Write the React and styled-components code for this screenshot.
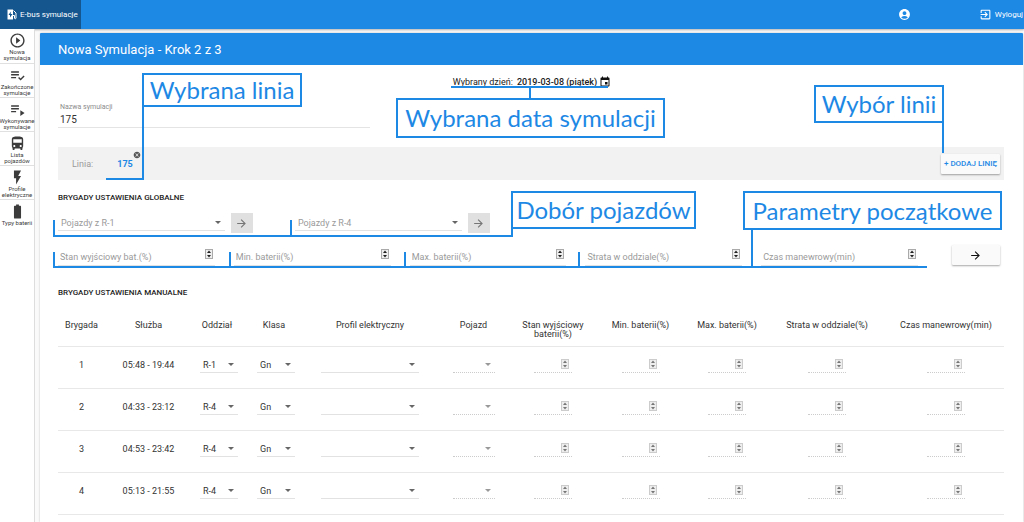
import React from "react";
import styled, { createGlobalStyle } from "styled-components";
import {
  MdPlayCircleOutline,
  MdPlaylistAddCheck,
  MdPlaylistPlay,
  MdDirectionsBus,
  MdFlashOn,
  MdBatteryFull,
  MdAccountCircle,
  MdExitToApp,
  MdEvent,
  MdCancel,
  MdArrowForward,
} from "react-icons/md";

const blue = "#1e88e5";

const Global = createGlobalStyle`
  * { box-sizing: border-box; }
  body { margin: 0; background: #fafafa; color: #333; font-family: Roboto, "Noto Sans", sans-serif; font-size: 9px; }
  button, input, select { font-family: inherit; color: inherit; margin: 0; padding: 0; border: 0; background: none; outline: 0; }
  #root { min-height: 100vh; }
`;

const Page = styled.div`
  position: relative;
  display: flex;
  flex-direction: column;
  height: 100vh;
  overflow: hidden;
`;

const TopBar = styled.header`
  display: flex;
  align-items: center;
  flex: none;
  height: 29px;
  background: ${blue};
  color: #fff;
  box-shadow: 0 1px 2px rgba(0, 0, 0, 0.3);
`;

const Brand = styled.a`
  display: flex;
  align-items: center;
  gap: 3px;
  height: 29px;
  padding: 0 3px 0 7px;
  background: #15568f;
  color: #fff;
  font-size: 8px;
  text-decoration: none;
  white-space: nowrap;
`;

const Account = styled.button`
  display: flex;
  margin-left: auto;
  margin-right: 68px;
  color: #fff;
`;

const Logout = styled.button`
  display: flex;
  align-items: center;
  gap: 3px;
  padding-right: 1px;
  color: #fff;
  font-size: 8px;
`;

const Columns = styled.div`
  display: flex;
  flex: 1;
`;

const Sidebar = styled.nav`
  display: flex;
  flex-direction: column;
  flex: none;
  width: 35px;
  background: #fff;
  border-right: 1px solid #ddd;
`;

const SideLink = styled.a`
  display: flex;
  flex-direction: column;
  align-items: center;
  height: ${(p) => (p.$first ? 35 : 34)}px;
  padding-top: 3px;
  border-bottom: ${(p) => (p.$last ? 0 : 1)}px solid #e0e0e0;
  color: #3c3c3c;
  font-size: 6px;
  line-height: 6px;
  text-align: center;
  text-decoration: none;
  span { white-space: pre; }
`;

const Card = styled.main`
  flex: 1;
  min-width: 0;
  margin: 4px 1px 0 5px;
  background: #fff;
  border-radius: 2px 2px 0 0;
  box-shadow: 0 0 2px rgba(0, 0, 0, 0.25);
`;

const Title = styled.h1`
  display: flex;
  align-items: center;
  height: 32px;
  margin: 0;
  padding: 0 18px;
  background: ${blue};
  border-radius: 1px 1px 0 0;
  color: #fff;
  font-size: 13px;
  font-weight: 400;
`;

const Body = styled.div`
  padding: 9px 19px 0 18px;
`;

const DateRow = styled.div`
  display: flex;
  justify-content: center;
  align-items: center;
  gap: 4px;
  height: 15px;
  color: #222;
  strong { font-weight: 500; }
`;

const DateButton = styled.button`
  display: flex;
  color: #111;
  margin: 0 -2px;
`;

const NameField = styled.label`
  display: flex;
  flex-direction: column;
  width: 33%;
  height: 39px;
  padding: 14px 2px 0;
  border-bottom: 1px solid #e4e4e4;
  color: #8c8c8c;
  font-size: 7px;
  line-height: 9px;
  input { height: 14px; width: 100%; font-size: 10px; color: #333; }
`;

const LineBar = styled.section`
  display: flex;
  align-items: center;
  height: 33px;
  margin-top: 19px;
  padding: 0 4px 0 14px;
  background: #f2f2f2;
  color: #9a9a9a;
`;

const LineTag = styled.div`
  display: flex;
  margin-left: 24px;
  color: ${blue};
  font-size: 9px;
  font-weight: 700;
  line-height: 14px;
`;

const RemoveLine = styled.button`
  display: flex;
  align-self: flex-start;
  margin-top: -6px;
  color: #555;
`;

const RaisedButton = styled.button`
  display: flex;
  align-items: center;
  justify-content: center;
  width: ${(p) => p.$width}px;
  height: 20px;
  margin-left: auto;
  background: #fafafa;
  border-radius: 1px;
  box-shadow: 0 1px 2px rgba(0, 0, 0, 0.35);
  color: ${(p) => p.$color};
  font-size: 8px;
  font-weight: 500;
  white-space: nowrap;
`;

const Heading = styled.h2`
  margin: ${(p) => p.$top}px 0 0;
  color: #222;
  font-size: 8px;
  line-height: 12px;
  font-weight: 500;
`;

const VehicleRow = styled.div`
  display: flex;
  gap: 42px;
  padding-top: 9px;
`;

const VehiclePick = styled.div`
  display: flex;
  align-items: center;
  gap: 6px;
  width: 20.6%;
`;

const SquareButton = styled.button`
  display: flex;
  align-items: center;
  justify-content: center;
  flex: none;
  width: 22px;
  height: 20px;
  background: #e0e0e0;
  color: #757575;
`;

const ParamRow = styled.div`
  display: grid;
  grid-template-columns: repeat(5, minmax(0, 157fr)) minmax(0, 67fr);
  column-gap: 19px;
  align-items: end;
  height: 33px;
  > button { margin: 0 4px 1px auto; }
`;

const Shell = styled.span`
  position: relative;
  display: flex;
  align-items: center;
  width: ${(p) => (p.$width ? p.$width + "px" : "100%")};
  height: ${(p) => p.$height || 16}px;
  margin: 0 auto;
  border-bottom: 1px ${(p) => (p.$dotted ? "dotted #ccc" : "solid #e2e2e2")};
`;

const SelectBox = styled.select`
  width: 100%;
  height: 14px;
  padding-left: 3px;
  appearance: none;
  color: ${(p) => (p.$muted ? "#9a9a9a" : "#333")};
  font-size: 9px;
  opacity: 1;
`;

const Caret = styled.i`
  position: absolute;
  right: 4px;
  top: 6px;
  border: 3px solid transparent;
  border-top-color: ${(p) => (p.$muted ? "#999" : "#666")};
  border-bottom: 0;
  pointer-events: none;
`;

const NumberBox = styled.input`
  flex: 1;
  min-width: 0;
  height: 12px;
  padding-left: 2px;
  font-size: 9px;
  appearance: textfield;
  &::placeholder { color: #9a9a9a; opacity: 1; }
  &::-webkit-inner-spin-button { appearance: none; margin: 0; }
`;

const SpinIcon = styled.svg`
  flex: none;
  width: 8px;
  height: 10px;
  margin: 0 ${(p) => (p.$muted ? 3 : 2)}px ${(p) => (p.$muted ? 2 : 6)}px 0;
`;

const Table = styled.table`
  width: 100%;
  margin-top: 5px;
  border-collapse: collapse;
  table-layout: fixed;
  text-align: center;
  font-size: 9px;
  th, td { padding: 0; border-bottom: 1px solid #e8e8e8; }
  th { height: 42px; padding-top: 17px; vertical-align: top; font-weight: 400; line-height: 9px; white-space: pre; }
  td { height: 42px; padding-bottom: 4px; }
`;

const SelectCell = styled.td`
  && { padding-left: ${(p) => p.$shift || 0}px; }
`;

const Marker = styled.div`
  position: absolute;
  left: ${(p) => p.$x}px;
  top: ${(p) => p.$y}px;
  width: ${(p) => p.$w || 2}px;
  height: ${(p) => p.$h || 2}px;
  background: ${blue};
  pointer-events: none;
`;

const Callout = styled.div`
  position: absolute;
  left: ${(p) => p.$x}px;
  top: ${(p) => p.$y}px;
  display: flex;
  align-items: center;
  justify-content: center;
  width: ${(p) => p.$w}px;
  height: ${(p) => p.$h}px;
  border: 2px solid ${blue};
  background: #fff;
  color: ${blue};
  font-family: Lato, "Open Sans", sans-serif;
  font-size: 24px;
  line-height: 28px;
  white-space: nowrap;
`;

function Spinner({ muted }) {
  return (
    <SpinIcon $muted={muted} viewBox="0 0 8 10" aria-hidden="true">
      <rect x="0.5" y="0.5" width="7" height="9" fill="#eee" stroke={muted ? "#ccc" : "#aaa"} />
      <path d="M2 4 4 1.5 6 4ZM2 6 4 8.5 6 6Z" fill={muted ? "#777" : "#222"} />
    </SpinIcon>
  );
}

function NumberField({ label, table }) {
  return (
    <Shell $width={table ? 38 : 0} $dotted={table} $height={table ? 16 : 17}>
      <NumberBox type="number" aria-label={label} placeholder={table ? "" : label} disabled={table} />
      <Spinner muted={table} />
    </Shell>
  );
}

function SelectField({ label, value, width, muted, dotted }) {
  return (
    <Shell $width={width} $dotted={dotted}>
      <SelectBox aria-label={label} $muted={muted} disabled={dotted}>
        <option>{value}</option>
      </SelectBox>
      <Caret $muted={dotted} />
    </Shell>
  );
}

const links = [
  ["Nowa\nsymulacja", MdPlayCircleOutline],
  ["Zakończone\nsymulacje", MdPlaylistAddCheck],
  ["Wykonywane\nsymulacje", MdPlaylistPlay],
  ["Lista\npojazdów", MdDirectionsBus],
  ["Profile\nelektryczne", MdFlashOn],
  ["Typy baterii", MdBatteryFull],
];

const params = ["Stan wyjściowy bat.(%)", "Min. baterii(%)", "Max. baterii(%)", "Strata w oddziale(%)", "Czas manewrowy(min)"];

const columns = [
  ["Brygada", 47],
  ["Służba", 87],
  ["Oddział", 50],
  ["Klasa", 64],
  ["Profil elektryczny", 128],
  ["Pojazd", 79],
  ["Stan wyjściowy\nbaterii(%)", 80],
  ["Min. baterii(%)", 95],
  ["Max. baterii(%)", 78],
  ["Strata w oddziale(%)", 122],
  ["Czas manewrowy(min)", 116],
];

const rows = [
  ["1", "05:48 - 19:44", "R-1"],
  ["2", "04:33 - 23:12", "R-4"],
  ["3", "04:53 - 23:42", "R-4"],
  ["4", "05:13 - 21:55", "R-4"],
];

const callouts = [
  ["Wybrana linia", 142, 73, 160, 34],
  ["Wybrana data symulacji", 396, 98, 269, 40],
  ["Wybór linii", 814, 85, 130, 38],
  ["Dobór pojazdów", 511, 191, 185, 38],
  ["Parametry początkowe", 743, 191, 259, 39],
];

/* Lines that tie a callout to its part of the form: x, y, width, height. */
const markers = [
  [142, 106, 2, 74],
  [106, 178, 38, 2],
  [451, 86, 157, 2],
  [529, 86, 2, 12],
  [942, 122, 2, 31],
  [511, 228, 2, 9],
  [53, 235, 460, 2],
  [53, 220, 2, 17],
  [290, 220, 2, 17],
  [53, 266, 874, 2],
  [53, 252, 2, 15],
  [229, 252, 2, 15],
  [404, 252, 2, 15],
  [578, 252, 2, 15],
  [751, 230, 2, 37],
];

export default function App() {
  return (
    <Page>
      <Global />
      <TopBar>
        <Brand href="#home">
          <svg width="10" height="11" viewBox="0 0 20 22" aria-hidden="true">
            <path d="M1 1h11v20H1z" fill="#fff" />
            <path d="M7.500 5 3 12h3v5l5-7H7.500z" fill="#15568f" />
            <path d="M13 3l5 5v10c0 2-3 2-3 0v-5h-3" fill="none" stroke="#fff" strokeWidth="2" />
          </svg>
          E-bus symulacje
        </Brand>
        <Account aria-label="Konto"><MdAccountCircle size={13} /></Account>
        <Logout><MdExitToApp size={13} />Wyloguj</Logout>
      </TopBar>
      <Columns>
        <Sidebar>
          {links.map(([label, Icon], i) => (
            <SideLink href="#menu" key={label} $first={i === 0} $last={i === links.length - 1}>
              <Icon size={17} />
              <span>{label}</span>
            </SideLink>
          ))}
        </Sidebar>
        <Card>
          <Title>Nowa Symulacja - Krok 2 z 3</Title>
          <Body>
            <DateRow>
              <span>Wybrany dzień:</span>
              <strong>2019-03-08 (piątek)</strong>
              <DateButton aria-label="Zmień datę"><MdEvent size={12} /></DateButton>
            </DateRow>
            <NameField>
              Nazwa symulacji
              <input type="text" defaultValue="175" />
            </NameField>
            <LineBar>
              <span>Linia:</span>
              <LineTag>
                175
                <RemoveLine aria-label="Usuń linię 175"><MdCancel size={8} /></RemoveLine>
              </LineTag>
              <RaisedButton $width={59} $color={blue}>+ DODAJ LINIĘ</RaisedButton>
            </LineBar>
            <Heading $top={12}>BRYGADY USTAWIENIA GLOBALNE</Heading>
            <VehicleRow>
              {["Pojazdy z R-1", "Pojazdy z R-4"].map((name) => (
                <VehiclePick key={name}>
                  <SelectField label={name} value={name} muted />
                  <SquareButton aria-label={"Zastosuj " + name}><MdArrowForward size={13} /></SquareButton>
                </VehiclePick>
              ))}
            </VehicleRow>
            <ParamRow>
              {params.map((name) => <NumberField key={name} label={name} />)}
              <RaisedButton $width={48} $color="#111" aria-label="Zastosuj parametry"><MdArrowForward size={13} /></RaisedButton>
            </ParamRow>
            <Heading $top={21}>BRYGADY USTAWIENIA MANUALNE</Heading>
            <Table>
              <colgroup>{columns.map(([name, w]) => <col key={name} width={w} />)}</colgroup>
              <thead>
                <tr>{columns.map(([name]) => <th key={name} scope="col">{name}</th>)}</tr>
              </thead>
              <tbody>
                {rows.map(([id, time, dept]) => (
                  <tr key={id}>
                    <td>{id}</td>
                    <td>{time}</td>
                    <SelectCell $shift={4}><SelectField label="Oddział" value={dept} width={38} /></SelectCell>
                    <SelectCell $shift={4}><SelectField label="Klasa" value="Gn" width={38} /></SelectCell>
                    <SelectCell><SelectField label="Profil elektryczny" value="" width={98} /></SelectCell>
                    <SelectCell><SelectField label="Pojazd" value="" width={42} dotted /></SelectCell>
                    {columns.slice(6).map(([name]) => (
                      <td key={name}><NumberField label={name} table /></td>
                    ))}
                  </tr>
                ))}
              </tbody>
            </Table>
          </Body>
        </Card>
      </Columns>
      {callouts.map(([text, x, y, w, h]) => (
        <Callout key={text} $x={x} $y={y} $w={w} $h={h}>{text}</Callout>
      ))}
      {markers.map(([x, y, w, h]) => (
        <Marker key={x + "-" + y} $x={x} $y={y} $w={w} $h={h} />
      ))}
    </Page>
  );
}
